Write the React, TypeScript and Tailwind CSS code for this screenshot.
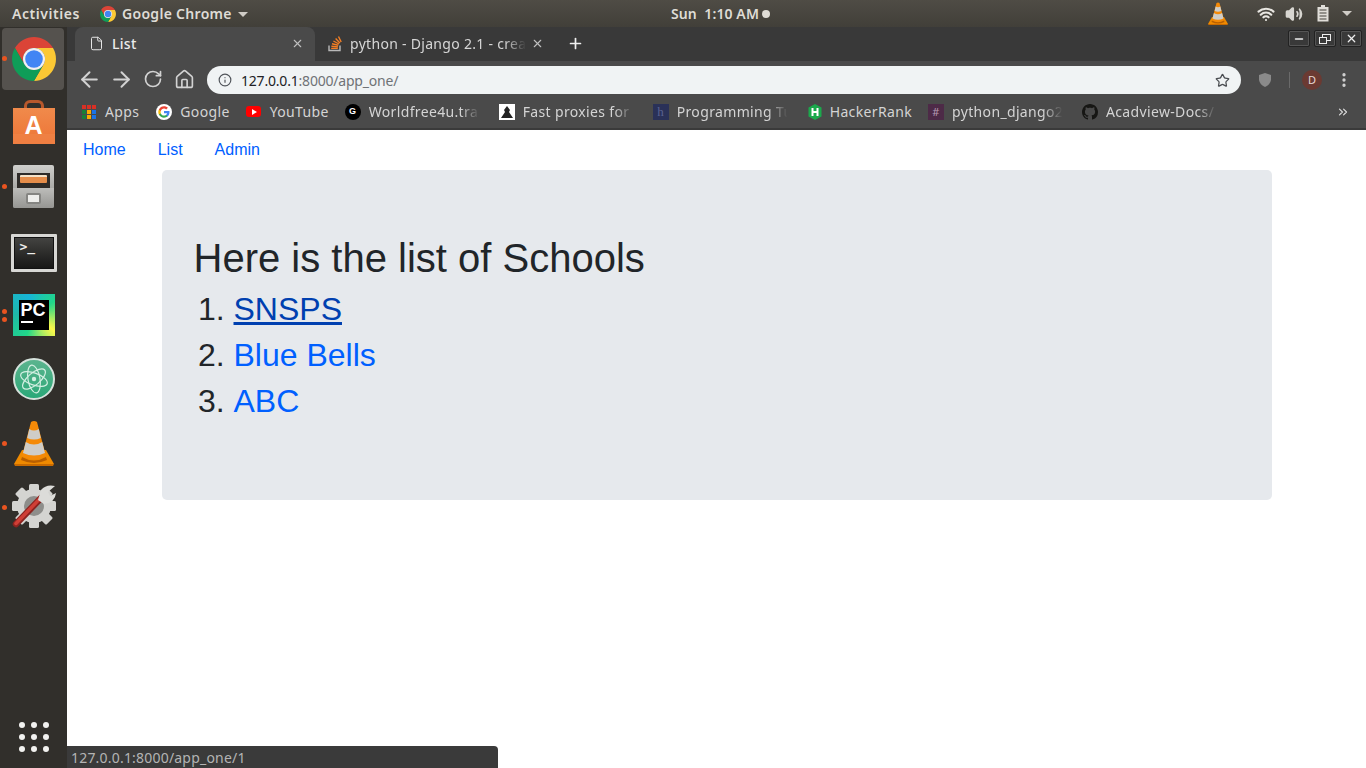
import { ArrowLeft, ArrowRight, RotateCw, Home, Info, Star, X, Plus, File, MoreVertical, ChevronsRight, Minus, Wifi, Volume2 } from "lucide-react";

const ubuntu = "font-['Noto_Sans',sans-serif]";

function ChromeLogo({ size }: { size: number }) {
  return (
    <svg width={size} height={size} viewBox="4 4 40 40" className="shrink-0">
      <path d="M6.7 14A20 20 0 0 1 41.3 14H24A10 10 0 0 0 15.34 29Z" fill="#db4437" />
      <path d="M41.3 14A20 20 0 0 1 24 44L32.66 29A10 10 0 0 0 24 14Z" fill="#fbc834" />
      <path d="M24 44A20 20 0 0 1 6.7 14L15.34 29A10 10 0 0 0 32.66 29Z" fill="#0f9d58" />
      <circle cx="24" cy="24" r="10" fill="#f1f1f1" />
      <circle cx="24" cy="24" r="8" fill="#4285f4" />
    </svg>
  );
}

function VlcCone({ width, height }: { width: number; height: number }) {
  return (
    <svg width={width} height={height} viewBox="0 0 40 46" className="shrink-0">
      <path d="M8 30L0 44H40L32 30Z" fill="#ef8a00" />
      <path d="M0 44H40L39 46H1Z" fill="#c96a00" />
      <path d="M8 37Q20 44 32 37L33 40Q20 46 7 40Z" fill="#b95f00" />
      <path d="M17 2Q20 0 23 2L32 36Q20 43 8 36Z" fill="#f58a07" />
      <path d="M15.200 9Q20 12 24.800 9L26.800 18Q20 21 13.200 18Z" fill="#cfcdc8" />
      <path d="M11.800 22Q20 27 28.200 22L31 33Q20 38 9 33Z" fill="#cfcdc8" />
    </svg>
  );
}

function DockDot({ top }: { top: number }) {
  return <div style={{ top }} className="absolute left-[2px] h-[5px] w-[5px] rounded-full bg-[#e95420]" />;
}

function Dock() {
  return (
    <aside className="relative flex w-[67px] shrink-0 flex-col items-center bg-[#312f2b]">
      <div className="absolute left-[2px] top-[1px] h-[62px] w-[62px] rounded-[4px] bg-[#55524e]" />
      <DockDot top={29} />
      <DockDot top={157} />
      <DockDot top={282} />
      <DockDot top={290} />
      <DockDot top={414} />
      <DockDot top={478} />

      <div className="relative mt-[10px] h-[44px]"><ChromeLogo size={44} /></div>

      {/* software centre */}
      <div className="relative mt-[19px] h-[44px] w-[42px]">
        <div className="absolute left-[11px] top-0 h-[12px] w-[20px] rounded-t-[6px] border-[3px] border-b-0 border-[#b8582c]" />
        <div className="absolute bottom-0 left-0 flex h-[36px] w-[42px] items-start justify-center bg-gradient-to-b from-[#f08a4b] to-[#ed7436] pt-[5px] font-['Liberation_Sans',sans-serif] text-[25px] font-bold leading-none text-white">A</div>
        <div className="absolute bottom-0 left-0 h-[10px] w-[42px] bg-[#f0854a]/60" />
      </div>

      {/* files */}
      <div className="relative mt-[21px] flex h-[43px] w-[41px] flex-col overflow-hidden rounded-[2px] bg-gradient-to-b from-[#cfcfcc] to-[#8c8c89]">
        <div className="mx-[4px] mt-[8px] h-[15px] bg-[#2e2b28] px-[3px] pt-[2px]">
          <div className="h-[8px] rounded-[1px] border-t-2 border-[#f5e2c8] bg-[#e58d4a]" />
        </div>
        <div className="flex flex-1 items-center justify-center bg-gradient-to-b from-[#bdbdba] to-[#969693]">
          <div className="h-[11px] w-[15px] rounded-[2px] border-[2px] border-[#858582] bg-[#eeeeec]" />
        </div>
      </div>

      {/* terminal */}
      <div className="relative mt-[26px] flex h-[38px] w-[46px] rounded-[1px] border-[3px] border-[#d7d7d4] bg-gradient-to-b from-[#454543] to-[#161615] shadow-[inset_0_0_0_1px_#111]">
        <span className="ml-[6px] mt-[2px] font-['DejaVu_Sans_Mono',monospace] text-[13px] font-bold leading-[16px] text-[#eeeeec]">&gt;_</span>
      </div>

      {/* pycharm */}
      <div className="relative mt-[22px] h-[42px] w-[42px] bg-[conic-gradient(from_200deg,#21d789,#1fb7a8,#17b5d8,#21d789,#fcf84a,#21d789)] p-[6px]">
        <div className="flex h-[30px] w-[30px] flex-col bg-black pl-[2px] pt-[2px] font-['Liberation_Sans',sans-serif] text-[18px] font-bold leading-[16px] text-white">
          PC
          <div className="mt-[3px] h-[2px] w-[12px] bg-white" />
        </div>
      </div>

      {/* atom */}
      <div className="relative mt-[22px] flex h-[42px] w-[42px] items-center justify-center rounded-full border-[2px] border-[#d5e2dc] bg-gradient-to-b from-[#5ab48e] to-[#27a878]">
        <svg width="32" height="32" viewBox="0 0 32 32" fill="none" stroke="#d3efe2" strokeWidth="1.2">
          <ellipse cx="16" cy="16" rx="14" ry="6" transform="rotate(20 16 16)" />
          <ellipse cx="16" cy="16" rx="14" ry="6" transform="rotate(80 16 16)" />
          <ellipse cx="16" cy="16" rx="14" ry="6" transform="rotate(140 16 16)" />
          <circle cx="16" cy="16" r="2.200" fill="#d3efe2" stroke="none" />
        </svg>
      </div>

      <div className="relative mt-[20px] h-[46px]"><VlcCone width={40} height={46} /></div>

      {/* system settings */}
      <div className="relative mt-[18px] h-[44px] w-[44px]">
        <svg width="44" height="44" viewBox="0 0 44 44">
          <g fill="#d4d4d1">
            <circle cx="22" cy="22" r="17" />
            <rect x="17" y="0" width="10" height="44" rx="1.500" />
            <rect x="17" y="0" width="10" height="44" rx="1.500" transform="rotate(45 22 22)" />
            <rect x="17" y="0" width="10" height="44" rx="1.500" transform="rotate(90 22 22)" />
            <rect x="17" y="0" width="10" height="44" rx="1.500" transform="rotate(135 22 22)" />
          </g>
          <circle cx="22" cy="22" r="10" fill="#8e8e8b" />
          <path d="M4 40L29 14" stroke="#8c231f" strokeWidth="6.500" strokeLinecap="round" />
          <path d="M4 39.500L29 13.500" stroke="#cf3f36" strokeWidth="3.500" strokeLinecap="round" />
          <path d="M26 16L29 6Q34 0 43 2L36 8L38 12L44 9Q43 19 32 20Z" fill="#dcdcd9" />
        </svg>
      </div>

      <div className="mb-[16px] mt-auto grid grid-cols-3 gap-[6px]">
        {Array.from({ length: 9 }).map((_, i) => (
          <div key={i} className="h-[6px] w-[6px] rounded-full bg-[#f2f2f0]" />
        ))}
      </div>
    </aside>
  );
}

function TopBar() {
  return (
    <header className={`relative flex h-[27px] shrink-0 items-center bg-gradient-to-b from-[#4f4c45] to-[#413f39] text-[14px] font-semibold text-[#dfdcd6] ${ubuntu}`}>
      <span className="ml-[12px] w-[88px] tracking-[0.55px]">Activities</span>
      <ChromeLogo size={16} />
      <span className="ml-[6px] tracking-[0.3px]">Google Chrome</span>
      <span className="ml-[6px] mt-[1px] h-0 w-0 border-x-[5px] border-t-[5px] border-x-transparent border-t-[#cfccc6]" />
      <span className="absolute left-[671px] flex items-center tracking-[0.1px]">
        Sun&nbsp;&nbsp;1:10 AM
        <span className="ml-[3px] h-[8px] w-[8px] rounded-full bg-[#dfdcd6]" />
      </span>
      <div className="ml-auto flex items-center">
        <VlcCone width={20} height={23} />
        <Wifi size={18} strokeWidth={2.8} className="ml-[29px] text-[#e8e6e1]" />
        <Volume2 size={18} strokeWidth={2.2} className="ml-[10px] fill-[#d8d6d1] text-[#d8d6d1]" />
        <svg width="12" height="17" viewBox="0 0 12 17" className="ml-[14px]">
          <path d="M4 0H8V2H11.500V16.500H.5V2H4Z" fill="#e0ded9" />
          <path d="M2.500 5H9.500M2.500 8H9.500M2.500 11H9.500M2.500 14H9.500" stroke="#45433d" strokeWidth="1" />
        </svg>
        <span className="ml-[13px] mr-[14px] h-0 w-0 border-x-[5px] border-t-[5px] border-x-transparent border-t-[#cfccc6]" />
      </div>
    </header>
  );
}

function WinBtn({ children }: { children: React.ReactNode }) {
  return (
    <div className="flex h-[17px] w-[22px] items-center justify-center rounded-[2px] border border-[#222] text-[#eeeeee] shadow-[inset_0_0_0_1px_#555]">
      {children}
    </div>
  );
}

function TabStrip() {
  return (
    <div className={`flex h-[34px] shrink-0 items-end bg-[#393939] pl-[8px] ${ubuntu}`}>
      <div className="flex h-[34px] w-[240px] items-center rounded-t-[8px] bg-[#4a4a4a] pb-[2px] pl-[14px] pr-[11px] text-[14px] font-medium text-[#ececec]">
        <File size={15} strokeWidth={1.6} className="text-[#e6e6e6]" />
        <span className="ml-[8px] tracking-[0.3px]">List</span>
        <X size={13} strokeWidth={2} className="ml-auto text-[#c0c0c0]" />
      </div>
      <div className="flex h-[34px] w-[237px] items-center pb-[2px] pl-[12px] pr-[8px] text-[14px] text-[#d6d6d6]">
        <svg width="16" height="17" viewBox="0 0 16 17" fill="none" className="shrink-0">
          <path d="M2 10.500V15.500H13V10.500" stroke="#b9b9b9" strokeWidth="1.400" />
          <path d="M4.200 13.400H10.800M4.400 11.200L11 11.900M5 8.800L11.300 10.200M6.400 6L12 9M8.600 3.600L12.900 8M11.500 1.500L14.200 7" stroke="#f47f24" strokeWidth="1.400" />
        </svg>
        <span className="ml-[7px] w-[176px] whitespace-nowrap tracking-[0.3px] [mask-image:linear-gradient(to_right,black_88%,transparent)]">python - Django 2.1 - creat</span>
        <X size={13} strokeWidth={2} className="ml-auto text-[#c0c0c0]" />
      </div>
      <div className="ml-[9px] flex h-[34px] w-[28px] items-center justify-center pb-[2px]">
        <Plus size={17} strokeWidth={2.4} className="text-[#f0f0f0]" />
      </div>
      <div className="ml-auto mr-[4px] flex h-[28px] gap-[4px] self-start pt-[3px]">
        <WinBtn><Minus size={12} strokeWidth={3} /></WinBtn>
        <WinBtn>
          <svg width="12" height="10" viewBox="0 0 12 10" fill="none" stroke="currentColor"><rect x="3.500" y=".5" width="8" height="6" /><rect x=".5" y="3.500" width="7" height="6" fill="#3a3a3a" /></svg>
        </WinBtn>
        <WinBtn><X size={13} strokeWidth={2.2} /></WinBtn>
      </div>
    </div>
  );
}

function Toolbar() {
  return (
    <div className={`flex h-[36px] shrink-0 items-center bg-[#4a4a4a] pl-[10px] pt-[2px] ${ubuntu}`}>
      <ArrowLeft size={25} strokeWidth={1.9} className="-mt-[2px] text-[#d2d2d2]" />
      <ArrowRight size={25} strokeWidth={1.9} className="-mt-[2px] ml-[7px] text-[#d2d2d2]" />
      <RotateCw size={20} strokeWidth={2} className="-mt-[2px] ml-[9px] text-[#d2d2d2]" />
      <Home size={21} strokeWidth={1.9} className="-mt-[2px] ml-[11px] text-[#d2d2d2]" />
      <div className="ml-[12px] flex h-[28px] w-[1034px] items-center rounded-full bg-[#f0f3f4] pl-[11px] pr-[11px] text-[14px] tracking-[-0.2px]">
        <Info size={14} strokeWidth={2} className="text-[#50545a]" />
        <span className="ml-[9px] text-[#202124]">127.0.0.1</span>
        <span className="text-[#6f7276]">:8000/app_one/</span>
        <Star size={15} strokeWidth={2} className="ml-auto text-[#4a4d51]" />
      </div>
      <svg width="12" height="14" viewBox="0 0 12 14" className="ml-[18px]">
        <path d="M6 0L12 2V7Q11 12 6 14Q1 12 0 7V2Z" fill="#8a8a8a" />
      </svg>
      <div className="ml-[18px] h-[16px] w-px bg-[#6a6a6a]" />
      <div className="ml-[12px] flex h-[20px] w-[20px] items-center justify-center rounded-full bg-[#6b3a32] text-[11px] text-[#e8d8d4]">D</div>
      <MoreVertical size={18} strokeWidth={2.4} className="ml-[13px] text-[#d2d2d2]" />
    </div>
  );
}

function Bookmark({ icon, label, fade, gap = 8 }: { icon: React.ReactNode; label: string; fade?: boolean; gap?: number }) {
  return (
    <div className="flex items-center">
      <div className="flex h-[16px] w-[16px] shrink-0 items-center justify-center">{icon}</div>
      <span
        style={{ marginLeft: gap }}
        className={fade ? "w-[114px] whitespace-nowrap [mask-image:linear-gradient(to_right,black_80%,transparent_97%)]" : "whitespace-nowrap"}
      >
        {label}
      </span>
    </div>
  );
}

function BookmarksBar() {
  return (
    <div className={`flex h-[33px] shrink-0 items-center gap-[16px] border-b-[2px] border-[#3a3a3a] bg-[#4a4a4a] pb-[2px] pl-[15px] text-[14px] tracking-[0.35px] text-[#d4d4d4] ${ubuntu}`}>
      <div className="mr-[1px] flex items-center">
        <div className="grid h-[14px] w-[14px] shrink-0 grid-cols-3 gap-[1px]">
          {["bg-[#d93025]", "bg-[#d93025]", "bg-[#d93025]", "bg-[#188038]", "bg-[#f9ab00]", "bg-[#1a73e8]", "bg-[#188038]", "bg-[#f9ab00]", "bg-[#1a73e8]"].map((c, i) => (
            <div key={i} className={c} />
          ))}
        </div>
        <span className="ml-[9px]">Apps</span>
      </div>
      <Bookmark label="Google" icon={
        <div className="flex h-[16px] w-[16px] items-center justify-center rounded-full bg-white">
          <svg width="12" height="12" viewBox="0 0 24 24">
            <path d="M23 12.300c0-.8-.1-1.600-.2-2.300H12v4.400h6.200c-.3 1.400-1.100 2.600-2.300 3.400v2.800h3.700c2.200-2 3.400-5 3.400-8.300z" fill="#4285f4" />
            <path d="M12 23.500c3.100 0 5.700-1 7.600-2.800l-3.700-2.800c-1 .7-2.300 1.100-3.900 1.100-3 0-5.500-2-6.400-4.700H1.800v2.900c1.900 3.800 5.800 6.300 10.200 6.300z" fill="#34a853" />
            <path d="M5.600 14.300c-.5-1.400-.5-3 0-4.500V6.900H1.800c-1.600 3.200-1.600 7 0 10.300z" fill="#fbbc05" />
            <path d="M12 5.100c1.700 0 3.200.6 4.400 1.700l3.300-3.300C17.700 1.600 15 .5 12 .5 7.600.5 3.700 3 1.800 6.900l3.800 2.900C6.500 7.100 9 5.100 12 5.100z" fill="#ea4335" />
          </svg>
        </div>
      } />
      <Bookmark label="YouTube" icon={
        <div className="flex h-[11px] w-[15px] items-center justify-center rounded-[3px] bg-[#f00]">
          <span className="ml-[1px] h-0 w-0 border-y-[3px] border-l-[5px] border-y-transparent border-l-white" />
        </div>
      } />
      <Bookmark label="Worldfree4u.tra" fade icon={
        <div className="flex h-[16px] w-[16px] items-center justify-center rounded-full bg-black font-['Liberation_Sans',sans-serif] text-[9px] font-bold text-white">G</div>
      } />
      <Bookmark label="Fast proxies for c" fade icon={
        <div className="flex h-[16px] w-[16px] items-end justify-center bg-white">
          <svg width="14" height="15" viewBox="0 0 14 15"><path d="M7 1L10 5L9 7L13 13H1L5 7L4 5Z" fill="#222" /></svg>
        </div>
      } />
      <Bookmark label="Programming Tu" fade icon={
        <div className="flex h-[16px] w-[16px] items-center justify-center bg-[#2a3158] font-['Liberation_Serif',serif] text-[13px] leading-none text-[#5a6290]">h</div>
      } />
      <Bookmark label="HackerRank" gap={7} icon={
        <svg width="16" height="16" viewBox="0 0 16 16">
          <path d="M8 0L14.500 3.500V12.500L8 16L1.500 12.500V3.500Z" fill="#1ba94c" />
          <path d="M5.500 4V12M10.500 4V12M5.500 8H10.500" stroke="#fff" strokeWidth="2" />
        </svg>
      } />
      <Bookmark label="python_django2" fade icon={
        <div className="flex h-[16px] w-[16px] items-center justify-center bg-[#4d2a47] text-[11px] leading-none text-[#b79bb2]">#</div>
      } />
      <Bookmark label="Acadview-Docs/" fade icon={
        <svg width="16" height="16" viewBox="0 0 16 16" fill="#161614">
          <path d="M8 0C3.580 0 0 3.580 0 8c0 3.540 2.290 6.530 5.470 7.590.4.070.55-.170.55-.380 0-.190-.010-.820-.010-1.490-2.010.370-2.530-.490-2.690-.940-.090-.230-.480-.940-.820-1.130-.280-.150-.680-.520-.010-.530.630-.010 1.080.580 1.230.820.720 1.210 1.870.870 2.330.660.070-.520.280-.870.510-1.070-1.780-.200-3.640-.890-3.640-3.950 0-.870.310-1.590.820-2.150-.080-.200-.360-1.020.080-2.120 0 0 .670-.210 2.200.820.640-.180 1.320-.270 2-.270s1.360.090 2 .270c1.530-1.040 2.200-.820 2.200-.820.440 1.100.160 1.920.080 2.120.510.560.820 1.270.820 2.150 0 3.070-1.870 3.750-3.650 3.950.290.250.540.730.540 1.480 0 1.070-.010 1.930-.010 2.200 0 .210.150.460.550.380A8.010 8.010 0 0016 8c0-4.420-3.580-8-8-8z" />
        </svg>
      } />
      <ChevronsRight size={14} strokeWidth={2} className="ml-auto mr-[16px] text-[#dcdcdc]" />
    </div>
  );
}

function Page() {
  return (
    <main className="relative min-h-0 flex-1 bg-white font-['Liberation_Sans',sans-serif] text-[#212529]">
      <nav className="flex h-[40px] items-center gap-[32px] pl-[16px] text-[16px] text-[#0060ff]">
        <a href="#">Home</a>
        <a href="#">List</a>
        <a href="#">Admin</a>
      </nav>
      <section className="ml-[95px] h-[330px] w-[1110px] rounded-[5px] bg-[#e6e9ed] pl-[31.5px] pr-[32px] pt-[64px]">
        <h1 className="text-[40px] leading-[48px]">Here is the list of Schools</h1>
        <ol className="mt-[4px] list-decimal pl-[40px] text-[32px] leading-[46px]">
          <li><a href="#" className="text-[#0040b0] underline">SNSPS</a></li>
          <li><a href="#" className="text-[#0060ff]">Blue Bells</a></li>
          <li><a href="#" className="text-[#0060ff]">ABC</a></li>
        </ol>
      </section>
      <div className={`absolute bottom-0 left-0 flex h-[22px] w-[431px] items-center rounded-tr-[4px] bg-[#3a3a3a] pl-[4px] text-[14px] tracking-[0.2px] text-[#b4b4b4] ${ubuntu}`}>
        127.0.0.1:8000/app_one/1
      </div>
    </main>
  );
}

export default function App() {
  return (
    <div className="flex h-[768px] w-[1366px] flex-col overflow-hidden">
      <TopBar />
      <div className="flex min-h-0 flex-1">
        <Dock />
        <div className="flex min-w-0 flex-1 flex-col">
          <TabStrip />
          <Toolbar />
          <BookmarksBar />
          <Page />
        </div>
      </div>
    </div>
  );
}
